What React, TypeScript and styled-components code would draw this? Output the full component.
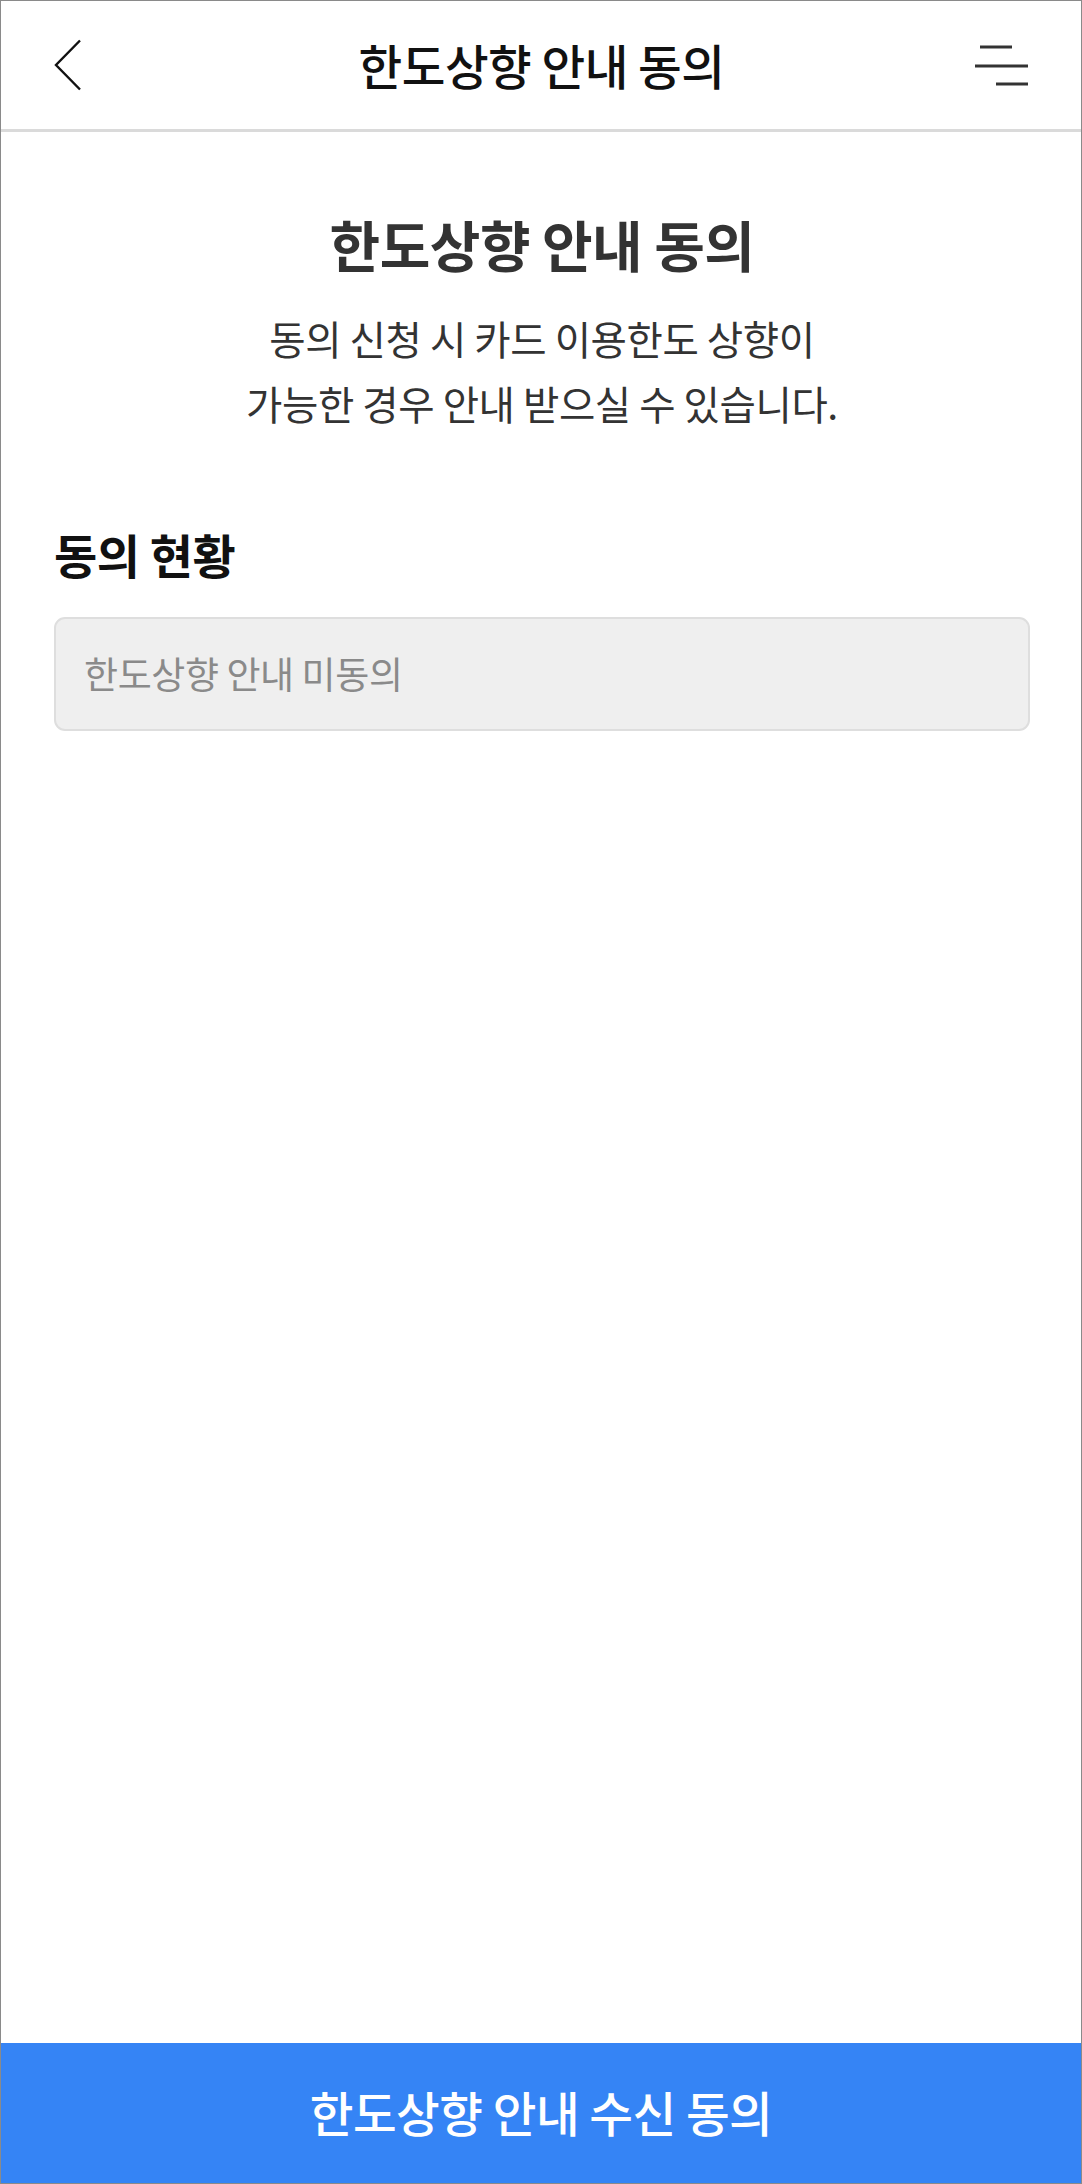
import React from "react";
import styled, { createGlobalStyle } from "styled-components";

const GlobalStyle = createGlobalStyle`
  *, *::before, *::after { box-sizing: border-box; }
  html, body { margin: 0; padding: 0; background: #ffffff; }
  body {
    font-family: "Noto Sans CJK KR", "Noto Sans", sans-serif;
    -webkit-font-smoothing: antialiased;
  }
  button { font-family: inherit; }
`;

const Frame = styled.div`
  width: 1082px;
  min-height: 100vh;
  border: 1px solid #8a8a8a;
  display: flex;
  flex-direction: column;
  background: #ffffff;
`;

const Header = styled.header`
  height: 131px;
  border-bottom: 3px solid #dadada;
  display: grid;
  grid-template-columns: 1fr auto 1fr;
  align-items: center;
  padding: 0 52px 0 53px;
`;

const IconButton = styled.button<{ $align: "start" | "end" }>`
  justify-self: ${(p) => p.$align};
  background: none;
  border: 0;
  padding: 0;
  margin: 0;
  display: flex;
  align-items: center;
  cursor: pointer;
`;

const HeaderTitle = styled.h1`
  margin: 0;
  font-size: 47.5px;
  line-height: 56px;
  font-weight: 500;
  color: #111111;
  letter-spacing: -0.5px;
  white-space: nowrap;
`;

const Content = styled.main`
  display: flex;
  flex-direction: column;
  padding: 0 51px 0 53px;
`;

const Intro = styled.section`
  display: flex;
  flex-direction: column;
  align-items: center;
  text-align: center;
  padding-top: 80px;
`;

const PageTitle = styled.h2`
  margin: 0;
  font-size: 55px;
  line-height: 62px;
  font-weight: 700;
  color: #333333;
  letter-spacing: -0.5px;
`;

const Description = styled.p`
  margin: 31px 0 0;
  font-size: 39.5px;
  line-height: 65px;
  font-weight: 400;
  color: #333333;
  letter-spacing: -0.4px;
`;

const SectionTitle = styled.h3`
  margin: 92px 0 0;
  font-size: 47px;
  line-height: 54px;
  font-weight: 700;
  color: #111111;
  letter-spacing: -0.5px;
`;

const StatusBox = styled.div`
  margin-top: 36px;
  height: 114px;
  border: 2px solid #dedede;
  border-radius: 11px;
  background: #efefef;
  display: flex;
  align-items: center;
  padding: 0 28px 2px;
`;

const StatusText = styled.span`
  font-size: 37px;
  font-weight: 400;
  color: #8a8a8a;
  letter-spacing: -0.4px;
`;

const BottomButton = styled.button`
  margin-top: auto;
  height: 140px;
  width: 100%;
  border: 0;
  background: #3584f5;
  color: #ffffff;
  font-size: 47.5px;
  font-weight: 500;
  letter-spacing: -0.5px;
  display: flex;
  align-items: center;
  justify-content: center;
  padding: 0 0 4px;
  cursor: pointer;
`;

const BackIcon = () => (
  <svg width="28" height="52" viewBox="0 0 28 52" aria-hidden="true">
    <polyline
      points="26,1.5 2,26 26,50.5"
      fill="none"
      stroke="#111111"
      strokeWidth="2.4"
      strokeLinejoin="miter"
    />
  </svg>
);

const MenuIcon = () => (
  <svg width="54" height="44" viewBox="0 0 54 44" aria-hidden="true">
    <line x1="5" y1="4" x2="37" y2="4" stroke="#333333" strokeWidth="3" />
    <line x1="0" y1="23" x2="53" y2="23" stroke="#333333" strokeWidth="3" />
    <line x1="21" y1="41" x2="53" y2="41" stroke="#333333" strokeWidth="3" />
  </svg>
);

export default function App() {
  return (
    <>
      <GlobalStyle />
      <Frame>
        <Header>
          <IconButton $align="start" aria-label="뒤로">
            <BackIcon />
          </IconButton>
          <HeaderTitle>한도상향 안내 동의</HeaderTitle>
          <IconButton $align="end" aria-label="메뉴">
            <MenuIcon />
          </IconButton>
        </Header>
        <Content>
          <Intro>
            <PageTitle>한도상향 안내 동의</PageTitle>
            <Description>
              동의 신청 시 카드 이용한도 상향이
              <br />
              가능한 경우 안내 받으실 수 있습니다.
            </Description>
          </Intro>
          <SectionTitle>동의 현황</SectionTitle>
          <StatusBox>
            <StatusText>한도상향 안내 미동의</StatusText>
          </StatusBox>
        </Content>
        <BottomButton>한도상향 안내 수신 동의</BottomButton>
      </Frame>
    </>
  );
}
